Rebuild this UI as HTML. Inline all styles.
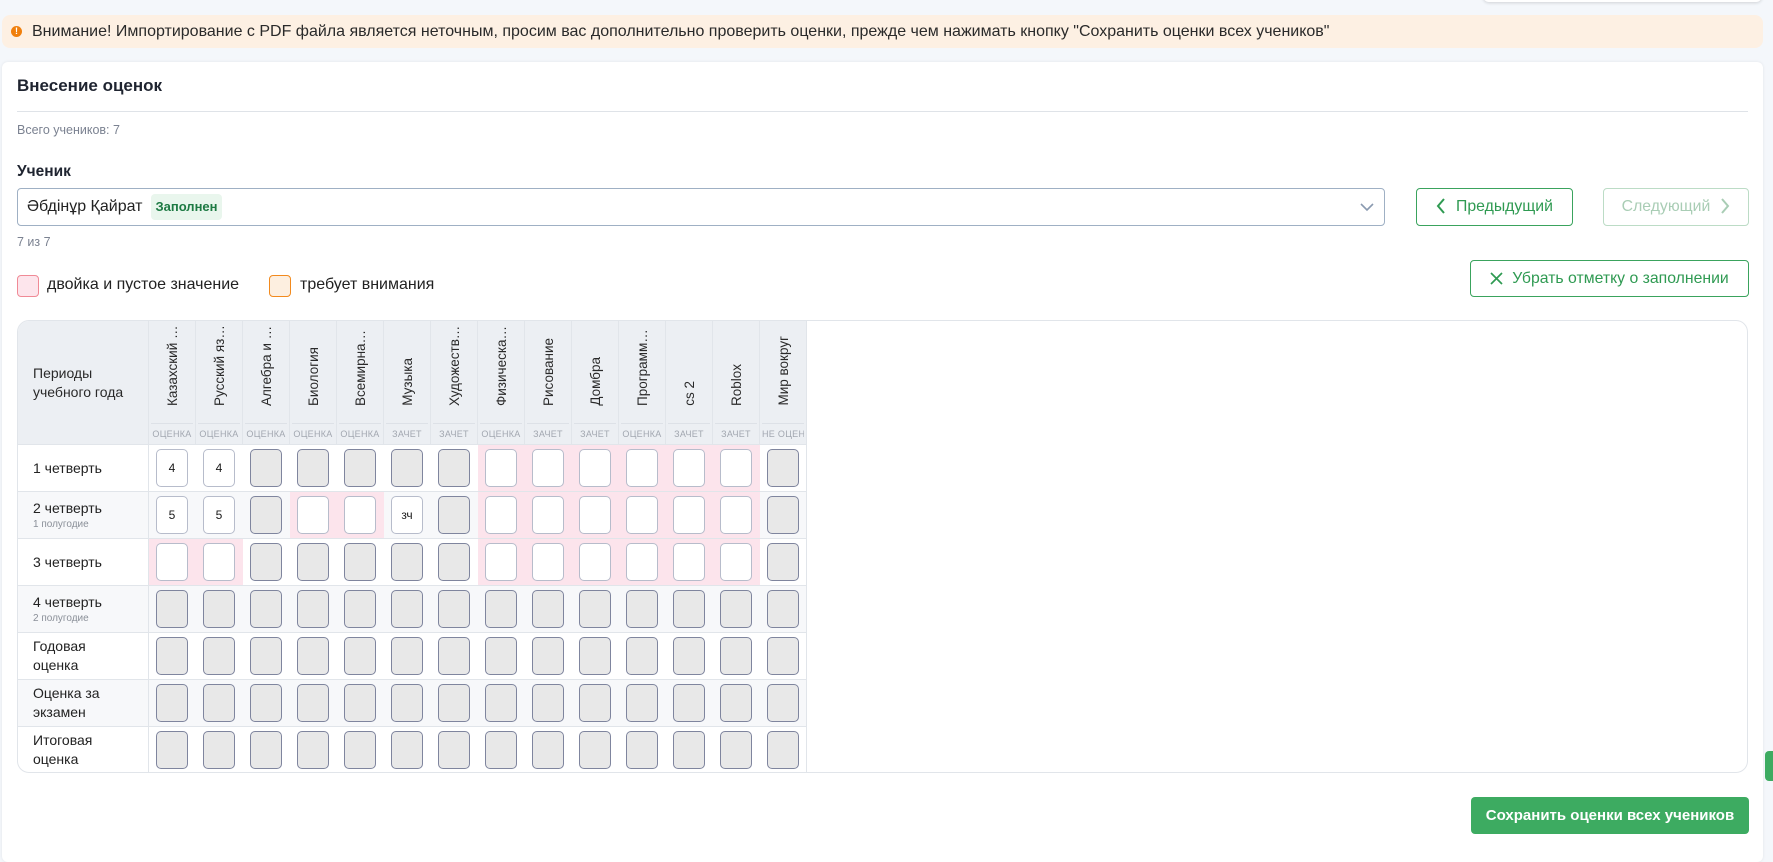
<!DOCTYPE html>
<html><head><meta charset="utf-8">
<style>
*{box-sizing:border-box;margin:0;padding:0}
body{width:1773px;height:840px;overflow:hidden;background:#f4f7fb;font-family:"Liberation Sans","Noto Sans CJK SC",sans-serif;color:#1f2430;position:relative}
.abs{position:absolute}
.topbar{left:1483px;top:-4px;width:279px;height:6px;background:#fff;border-radius:0 0 6px 6px;box-shadow:0 1px 3px rgba(0,0,0,.15)}
.banner{left:2px;top:15px;width:1761px;height:33px;background:#fdf0e3;border-radius:8px;font-size:16px;line-height:33px;padding-left:30px;color:#2a2a2a}
.banner .ic{position:absolute;left:9px;top:11px;width:11px;height:11px;border-radius:50%;background:#f07f0c;color:#fff;font-size:9px;line-height:11px;text-align:center;font-weight:bold}
.card{left:2px;top:62px;width:1761px;height:800px;background:#fff;border-radius:6px;box-shadow:0 0 3px rgba(0,0,0,.08)}
.title{left:17px;top:76px;font-size:17px;font-weight:600;color:#1f2430}
.divider{left:17px;top:111px;width:1731px;height:1px;background:#dfe3e8}
.small{font-size:12.5px;color:#7b8291}
.lbl{left:17px;top:163px;font-size:15.5px;font-weight:600}
.select{left:17px;top:188px;width:1368px;height:38px;border:1px solid #9fb0c4;border-radius:4px}
.select .name{position:absolute;left:9px;top:9px;font-size:16px;color:#222}
.badge{position:absolute;left:133px;top:5px;width:71px;height:26px;background:#e9f6ed;border-radius:4px;color:#1d7a43;font-size:13px;font-weight:600;line-height:26px;text-align:center}
.btn{border:1px solid #3aa35d;border-radius:4px;color:#2f9a52;font-size:15.8px;text-align:center;background:#fff}
.btn.dis{border-color:#bcdcc6;color:#a9cdb5}
.legbox{width:22px;height:22px;border-radius:4px}
.legtxt{font-size:16px;color:#222}
.tbl{left:17px;top:320px;width:1731px;height:453px;border:1px solid #e1e5ea;border-radius:12px;overflow:hidden;background:#fff}
.hdr{position:absolute;left:0;top:0;width:789px;height:124px;background:#eceff3;border-right:1px solid #e1e5ea}
.hfirst{position:absolute;left:0;top:0;width:131px;height:124px;border-right:1px solid #e1e5ea;font-size:14px;line-height:19px;padding:43px 0 0 15px;color:#2a2a2a}
.hcol{position:absolute;top:0;width:47px;height:124px;border-right:1px solid #e1e5ea}
.hcol .rot{position:absolute;left:0;width:46px;top:4px;height:81px;display:flex;justify-content:center;align-items:flex-end}
.hcol .rot span{writing-mode:vertical-rl;transform:rotate(180deg);font-size:13.5px;color:#2a2a2a;white-space:nowrap;overflow:hidden;text-overflow:ellipsis;max-height:81px;display:block}
.hcol .typ{position:absolute;left:2px;right:2px;top:102px;height:22px;border-top:1px solid #dde1e7;font-size:9px;letter-spacing:.3px;color:#a2a7b0;text-align:center;line-height:21px;white-space:nowrap;overflow:hidden}
.row{position:absolute;left:0;width:789px;height:47px;border-top:1px solid #e1e5ea;border-right:1px solid #e1e5ea}
.row.alt{background:#f7f8fa}
.row .pl{position:absolute;left:0;top:0;width:131px;height:46px;border-right:1px solid #e1e5ea;font-size:14px;color:#222;padding-left:15px;display:flex;flex-direction:column;justify-content:center;line-height:19px}
.row .pl small{font-size:10px;color:#8a8f98;line-height:14px}
.c{position:absolute;top:0;width:47px;height:46px}
.c.p{background:#fce4ec}
.c b{position:absolute;left:7px;top:4px;width:32px;height:38px;border-radius:5px;border:1px solid #b7bccb;background:#fff;font-weight:normal;font-size:12px;text-align:center;line-height:36px;color:#1a1a1a}
.c b.d{background:#e8e8e8;border:1px solid #7f859e}
.save{left:1471px;top:797px;width:278px;height:37px;background:#3dab61;border-radius:4px;color:#fff;font-size:15px;font-weight:600;text-align:center;line-height:37px}
.gtab{left:1765px;top:751px;width:10px;height:30px;background:#3dab61;border-radius:4px 0 0 4px}
</style></head><body>
<div class="abs topbar"></div>
<div class="abs banner"><span class="ic">!</span>Внимание! Импортирование с PDF файла является неточным, просим вас дополнительно проверить оценки, прежде чем нажимать кнопку "Сохранить оценки всех учеников"</div>
<div class="abs card"></div>
<div class="abs title">Внесение оценок</div>
<div class="abs divider"></div>
<div class="abs small" style="left:17px;top:123px">Всего учеников: 7</div>
<div class="abs lbl">Ученик</div>
<div class="abs select"><span class="name">Әбдінұр Қайрат</span><span class="badge">Заполнен</span>
<svg style="position:absolute;right:10px;top:13px" width="14" height="10" viewBox="0 0 14 10"><path d="M1 2 L7 8 L13 2" fill="none" stroke="#8a9ab0" stroke-width="1.6"/></svg></div>
<div class="abs small" style="left:17px;top:235px">7 из 7</div>
<div class="abs btn" style="left:1416px;top:188px;width:157px;height:38px;line-height:36px"><svg style="vertical-align:-3px;margin-right:10px" width="10" height="16" viewBox="0 0 10 16"><path d="M8 1 L2 8 L8 15" fill="none" stroke="#2f9a52" stroke-width="2"/></svg>Предыдущий</div>
<div class="abs btn dis" style="left:1603px;top:188px;width:146px;height:38px;line-height:36px">Следующий<svg style="vertical-align:-3px;margin-left:10px" width="10" height="16" viewBox="0 0 10 16"><path d="M2 1 L8 8 L2 15" fill="none" stroke="#a9cdb5" stroke-width="2"/></svg></div>
<div class="abs btn" style="left:1470px;top:260px;width:279px;height:37px;line-height:35px"><svg style="vertical-align:-2px;margin-right:9px" width="13" height="13" viewBox="0 0 13 13"><path d="M1 1 L12 12 M12 1 L1 12" fill="none" stroke="#2f9a52" stroke-width="1.7"/></svg>Убрать отметку о заполнении</div>
<div class="abs legbox" style="left:17px;top:275px;background:#fde5ec;border:1px solid #f08a96"></div>
<div class="abs legtxt" style="left:47px;top:276px">двойка и пустое значение</div>
<div class="abs legbox" style="left:269px;top:275px;background:#fdefe0;border:1px solid #f28a1e"></div>
<div class="abs legtxt" style="left:300px;top:276px">требует внимания</div>

<div class="abs tbl">
<div class="hdr">
<div class="hfirst">Периоды<br>учебного года</div>
<div class="hcol" style="left:131px"><div class="rot"><span>Казахский язык</span></div><div class="typ">ОЦЕНКА</div></div>
<div class="hcol" style="left:178px"><div class="rot"><span>Русский язык</span></div><div class="typ">ОЦЕНКА</div></div>
<div class="hcol" style="left:225px"><div class="rot"><span>Алгебра и начала</span></div><div class="typ">ОЦЕНКА</div></div>
<div class="hcol" style="left:272px"><div class="rot"><span>Биология</span></div><div class="typ">ОЦЕНКА</div></div>
<div class="hcol" style="left:319px"><div class="rot"><span>Всемирная история</span></div><div class="typ">ОЦЕНКА</div></div>
<div class="hcol" style="left:366px"><div class="rot"><span>Музыка</span></div><div class="typ">ЗАЧЕТ</div></div>
<div class="hcol" style="left:413px"><div class="rot"><span>Художественный труд</span></div><div class="typ">ЗАЧЕТ</div></div>
<div class="hcol" style="left:460px"><div class="rot"><span>Физическая культура</span></div><div class="typ">ОЦЕНКА</div></div>
<div class="hcol" style="left:507px"><div class="rot"><span>Рисование</span></div><div class="typ">ЗАЧЕТ</div></div>
<div class="hcol" style="left:554px"><div class="rot"><span>Домбра</span></div><div class="typ">ЗАЧЕТ</div></div>
<div class="hcol" style="left:601px"><div class="rot"><span>Программирование</span></div><div class="typ">ОЦЕНКА</div></div>
<div class="hcol" style="left:648px"><div class="rot"><span>cs 2</span></div><div class="typ">ЗАЧЕТ</div></div>
<div class="hcol" style="left:695px"><div class="rot"><span>Roblox</span></div><div class="typ">ЗАЧЕТ</div></div>
<div class="hcol" style="left:742px"><div class="rot"><span>Мир вокруг</span></div><div class="typ">НЕ ОЦЕНКА</div></div>
</div>

<div class="row" style="top:123px"><div class="pl">1 четверть</div>
<div class="c" style="left:131px"><b>4</b></div><div class="c" style="left:178px"><b>4</b></div>
<div class="c" style="left:225px"><b class="d"></b></div><div class="c" style="left:272px"><b class="d"></b></div><div class="c" style="left:319px"><b class="d"></b></div><div class="c" style="left:366px"><b class="d"></b></div><div class="c" style="left:413px"><b class="d"></b></div>
<div class="c p" style="left:460px"><b></b></div><div class="c p" style="left:507px"><b></b></div><div class="c p" style="left:554px"><b></b></div><div class="c p" style="left:601px"><b></b></div><div class="c p" style="left:648px"><b></b></div><div class="c p" style="left:695px"><b></b></div>
<div class="c" style="left:742px"><b class="d"></b></div></div>

<div class="row alt" style="top:170px"><div class="pl">2 четверть<small>1 полугодие</small></div>
<div class="c" style="left:131px"><b>5</b></div><div class="c" style="left:178px"><b>5</b></div>
<div class="c" style="left:225px"><b class="d"></b></div><div class="c p" style="left:272px"><b></b></div><div class="c p" style="left:319px"><b></b></div><div class="c" style="left:366px"><b>зч</b></div><div class="c" style="left:413px"><b class="d"></b></div>
<div class="c p" style="left:460px"><b></b></div><div class="c p" style="left:507px"><b></b></div><div class="c p" style="left:554px"><b></b></div><div class="c p" style="left:601px"><b></b></div><div class="c p" style="left:648px"><b></b></div><div class="c p" style="left:695px"><b></b></div>
<div class="c" style="left:742px"><b class="d"></b></div></div>

<div class="row" style="top:217px"><div class="pl">3 четверть</div>
<div class="c p" style="left:131px"><b></b></div><div class="c p" style="left:178px"><b></b></div>
<div class="c" style="left:225px"><b class="d"></b></div><div class="c" style="left:272px"><b class="d"></b></div><div class="c" style="left:319px"><b class="d"></b></div><div class="c" style="left:366px"><b class="d"></b></div><div class="c" style="left:413px"><b class="d"></b></div>
<div class="c p" style="left:460px"><b></b></div><div class="c p" style="left:507px"><b></b></div><div class="c p" style="left:554px"><b></b></div><div class="c p" style="left:601px"><b></b></div><div class="c p" style="left:648px"><b></b></div><div class="c p" style="left:695px"><b></b></div>
<div class="c" style="left:742px"><b class="d"></b></div></div>

<div class="row alt" style="top:264px"><div class="pl">4 четверть<small>2 полугодие</small></div>
<div class="c" style="left:131px"><b class="d"></b></div><div class="c" style="left:178px"><b class="d"></b></div><div class="c" style="left:225px"><b class="d"></b></div><div class="c" style="left:272px"><b class="d"></b></div><div class="c" style="left:319px"><b class="d"></b></div><div class="c" style="left:366px"><b class="d"></b></div><div class="c" style="left:413px"><b class="d"></b></div><div class="c" style="left:460px"><b class="d"></b></div><div class="c" style="left:507px"><b class="d"></b></div><div class="c" style="left:554px"><b class="d"></b></div><div class="c" style="left:601px"><b class="d"></b></div><div class="c" style="left:648px"><b class="d"></b></div><div class="c" style="left:695px"><b class="d"></b></div><div class="c" style="left:742px"><b class="d"></b></div></div>

<div class="row" style="top:311px"><div class="pl">Годовая<br>оценка</div>
<div class="c" style="left:131px"><b class="d"></b></div><div class="c" style="left:178px"><b class="d"></b></div><div class="c" style="left:225px"><b class="d"></b></div><div class="c" style="left:272px"><b class="d"></b></div><div class="c" style="left:319px"><b class="d"></b></div><div class="c" style="left:366px"><b class="d"></b></div><div class="c" style="left:413px"><b class="d"></b></div><div class="c" style="left:460px"><b class="d"></b></div><div class="c" style="left:507px"><b class="d"></b></div><div class="c" style="left:554px"><b class="d"></b></div><div class="c" style="left:601px"><b class="d"></b></div><div class="c" style="left:648px"><b class="d"></b></div><div class="c" style="left:695px"><b class="d"></b></div><div class="c" style="left:742px"><b class="d"></b></div></div>

<div class="row alt" style="top:358px"><div class="pl">Оценка за<br>экзамен</div>
<div class="c" style="left:131px"><b class="d"></b></div><div class="c" style="left:178px"><b class="d"></b></div><div class="c" style="left:225px"><b class="d"></b></div><div class="c" style="left:272px"><b class="d"></b></div><div class="c" style="left:319px"><b class="d"></b></div><div class="c" style="left:366px"><b class="d"></b></div><div class="c" style="left:413px"><b class="d"></b></div><div class="c" style="left:460px"><b class="d"></b></div><div class="c" style="left:507px"><b class="d"></b></div><div class="c" style="left:554px"><b class="d"></b></div><div class="c" style="left:601px"><b class="d"></b></div><div class="c" style="left:648px"><b class="d"></b></div><div class="c" style="left:695px"><b class="d"></b></div><div class="c" style="left:742px"><b class="d"></b></div></div>

<div class="row" style="top:405px"><div class="pl">Итоговая<br>оценка</div>
<div class="c" style="left:131px"><b class="d"></b></div><div class="c" style="left:178px"><b class="d"></b></div><div class="c" style="left:225px"><b class="d"></b></div><div class="c" style="left:272px"><b class="d"></b></div><div class="c" style="left:319px"><b class="d"></b></div><div class="c" style="left:366px"><b class="d"></b></div><div class="c" style="left:413px"><b class="d"></b></div><div class="c" style="left:460px"><b class="d"></b></div><div class="c" style="left:507px"><b class="d"></b></div><div class="c" style="left:554px"><b class="d"></b></div><div class="c" style="left:601px"><b class="d"></b></div><div class="c" style="left:648px"><b class="d"></b></div><div class="c" style="left:695px"><b class="d"></b></div><div class="c" style="left:742px"><b class="d"></b></div></div>
</div>

<div class="abs save">Сохранить оценки всех учеников</div>
<div class="abs gtab"></div>
</body></html>
